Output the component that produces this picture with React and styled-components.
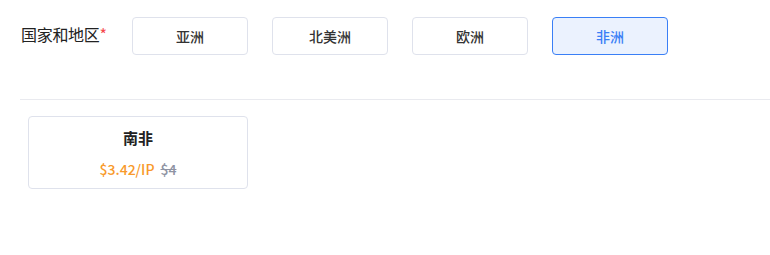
import React, { useState } from 'react'
import styled, { createGlobalStyle } from 'styled-components'

const GlobalStyle = createGlobalStyle`
  body {
    margin: 0;
    background: #fff;
    font-family: "Noto Sans CJK SC", "Noto Sans", sans-serif;
    color: #222;
  }
`

const Page = styled.div`
  padding: 17px 0 0 20px;
`

const FieldRow = styled.div`
  display: flex;
  align-items: center;
  height: 38px;
`

const Label = styled.div`
  width: 112px;
  padding-left: 1px;
  box-sizing: border-box;
  font-size: 16px;
  letter-spacing: -0.3px;
  color: #222;
  margin-top: -4px;

  span {
    color: #f5484c;
  }
`

const Options = styled.div`
  display: flex;
  gap: 24px;
`

const Option = styled.div`
  width: 116px;
  height: 38px;
  box-sizing: border-box;
  display: flex;
  align-items: center;
  justify-content: center;
  border-radius: 4px;
  font-size: 14px;
  font-weight: 500;
  cursor: pointer;
  border: 1px solid ${({ active }) => (active ? '#3a7ff6' : '#dfe2ec')};
  background: ${({ active }) => (active ? '#ebf2fe' : '#fff')};
  color: ${({ active }) => (active ? '#3a7ff6' : '#333')};
`

const Divider = styled.div`
  height: 1px;
  background: #e9eaef;
  margin-top: 44px;
`

const CardList = styled.div`
  display: flex;
  gap: 20px;
  padding: 16px 0 0 8px;
`

const Card = styled.div`
  width: 220px;
  height: 73px;
  box-sizing: border-box;
  border: 1px solid #dfe2ec;
  border-radius: 4px;
  display: flex;
  flex-direction: column;
  align-items: center;
  padding-top: 10px;
`

const CardTitle = styled.div`
  font-size: 15px;
  font-weight: 700;
  color: #222;
  line-height: 22px;
`

const Price = styled.div`
  margin-top: 10px;
  font-size: 14px;
  font-weight: 500;
  line-height: 20px;
  display: flex;
  gap: 6px;
`

const Now = styled.span`
  color: #f89a2c;
`

const Old = styled.span`
  color: #8e93a3;
  text-decoration: line-through;
`

const regions = ['亚洲', '北美洲', '欧洲', '非洲']

const countries = {
  非洲: [{ name: '南非', price: '$3.42/IP', old: '$4' }],
}

const App = () => {
  const [current, setCurrent] = useState('非洲')
  const list = countries[current] || []

  return (
    <>
      <GlobalStyle />
      <Page>
        <FieldRow>
          <Label>国家和地区<span>*</span></Label>
          <Options>
            {regions.map((item) => (
              <Option key={item} active={item === current} onClick={() => setCurrent(item)}>
                {item}
              </Option>
            ))}
          </Options>
        </FieldRow>
        <Divider />
        <CardList>
          {list.map((item) => (
            <Card key={item.name}>
              <CardTitle>{item.name}</CardTitle>
              <Price>
                <Now>{item.price}</Now>
                <Old>{item.old}</Old>
              </Price>
            </Card>
          ))}
        </CardList>
      </Page>
    </>
  )
}

export default App
